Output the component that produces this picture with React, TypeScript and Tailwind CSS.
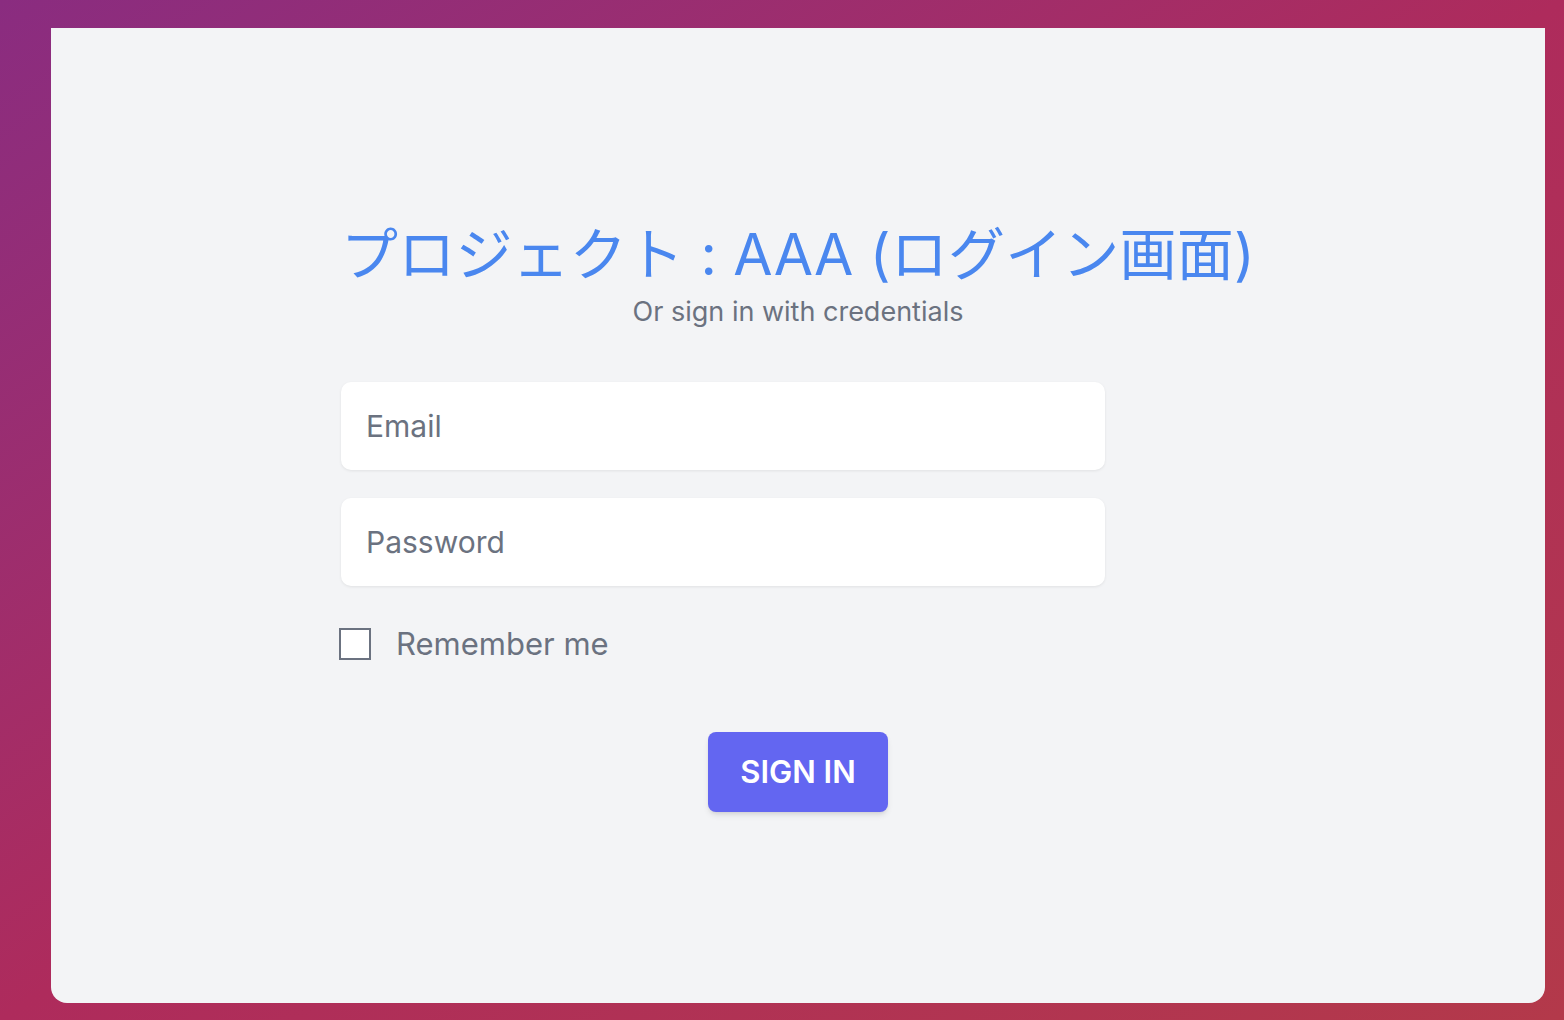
export default function App() {
  return (
    <div className="h-[1020px] w-full bg-gradient-to-br from-[#8a2c80] via-[#ae2b5c] to-[#b3394a] pl-[51px] pr-[19px] pt-[28px] pb-[17px] font-['Inter','Noto_Sans_CJK_JP',sans-serif]">
      <div className="h-full rounded-b-2xl bg-[#f3f4f6] flex flex-col items-center">
        <div className="mt-[195px] w-[914px] flex flex-col">
          <h1 className="whitespace-nowrap text-center text-[57px] leading-[64px] text-[#4a87ef] font-normal tracking-[0.2px]">
            プロジェクト : AAA (ログイン画面)
          </h1>
          <p className="mt-[9px] text-center text-[27px] leading-[32px] text-[#6b7280]">
            Or sign in with credentials
          </p>

          {/* Form */}
          <form className="mt-[54px] flex flex-col">
            <input
              type="email"
              placeholder="Email"
              className="w-[764px] h-[88px] rounded-[10px] bg-white px-[25px] text-[30px] text-gray-700 placeholder:text-[#6b7280] shadow-[0_1px_3px_rgba(0,0,0,0.08)] outline-none"
            />
            <input
              type="password"
              placeholder="Password"
              className="mt-[28px] w-[764px] h-[88px] rounded-[10px] bg-white px-[25px] text-[30px] text-gray-700 placeholder:text-[#6b7280] shadow-[0_1px_3px_rgba(0,0,0,0.08)] outline-none"
            />
            <label className="mt-[38px] flex items-center gap-[25px]">
              <span className="ml-[-2px] w-[32px] h-[32px] border-2 border-[#6b7280] bg-white" />
              <span className="text-[31px] leading-[40px] text-[#6b7280]">Remember me</span>
            </label>
            <div className="mt-[68px] flex justify-center">
              <button
                type="button"
                className="w-[180px] h-[80px] rounded-lg bg-[#6366f1] text-white text-[31px] font-semibold shadow-md"
              >
                SIGN IN
              </button>
            </div>
          </form>
        </div>
      </div>
    </div>
  )
}
